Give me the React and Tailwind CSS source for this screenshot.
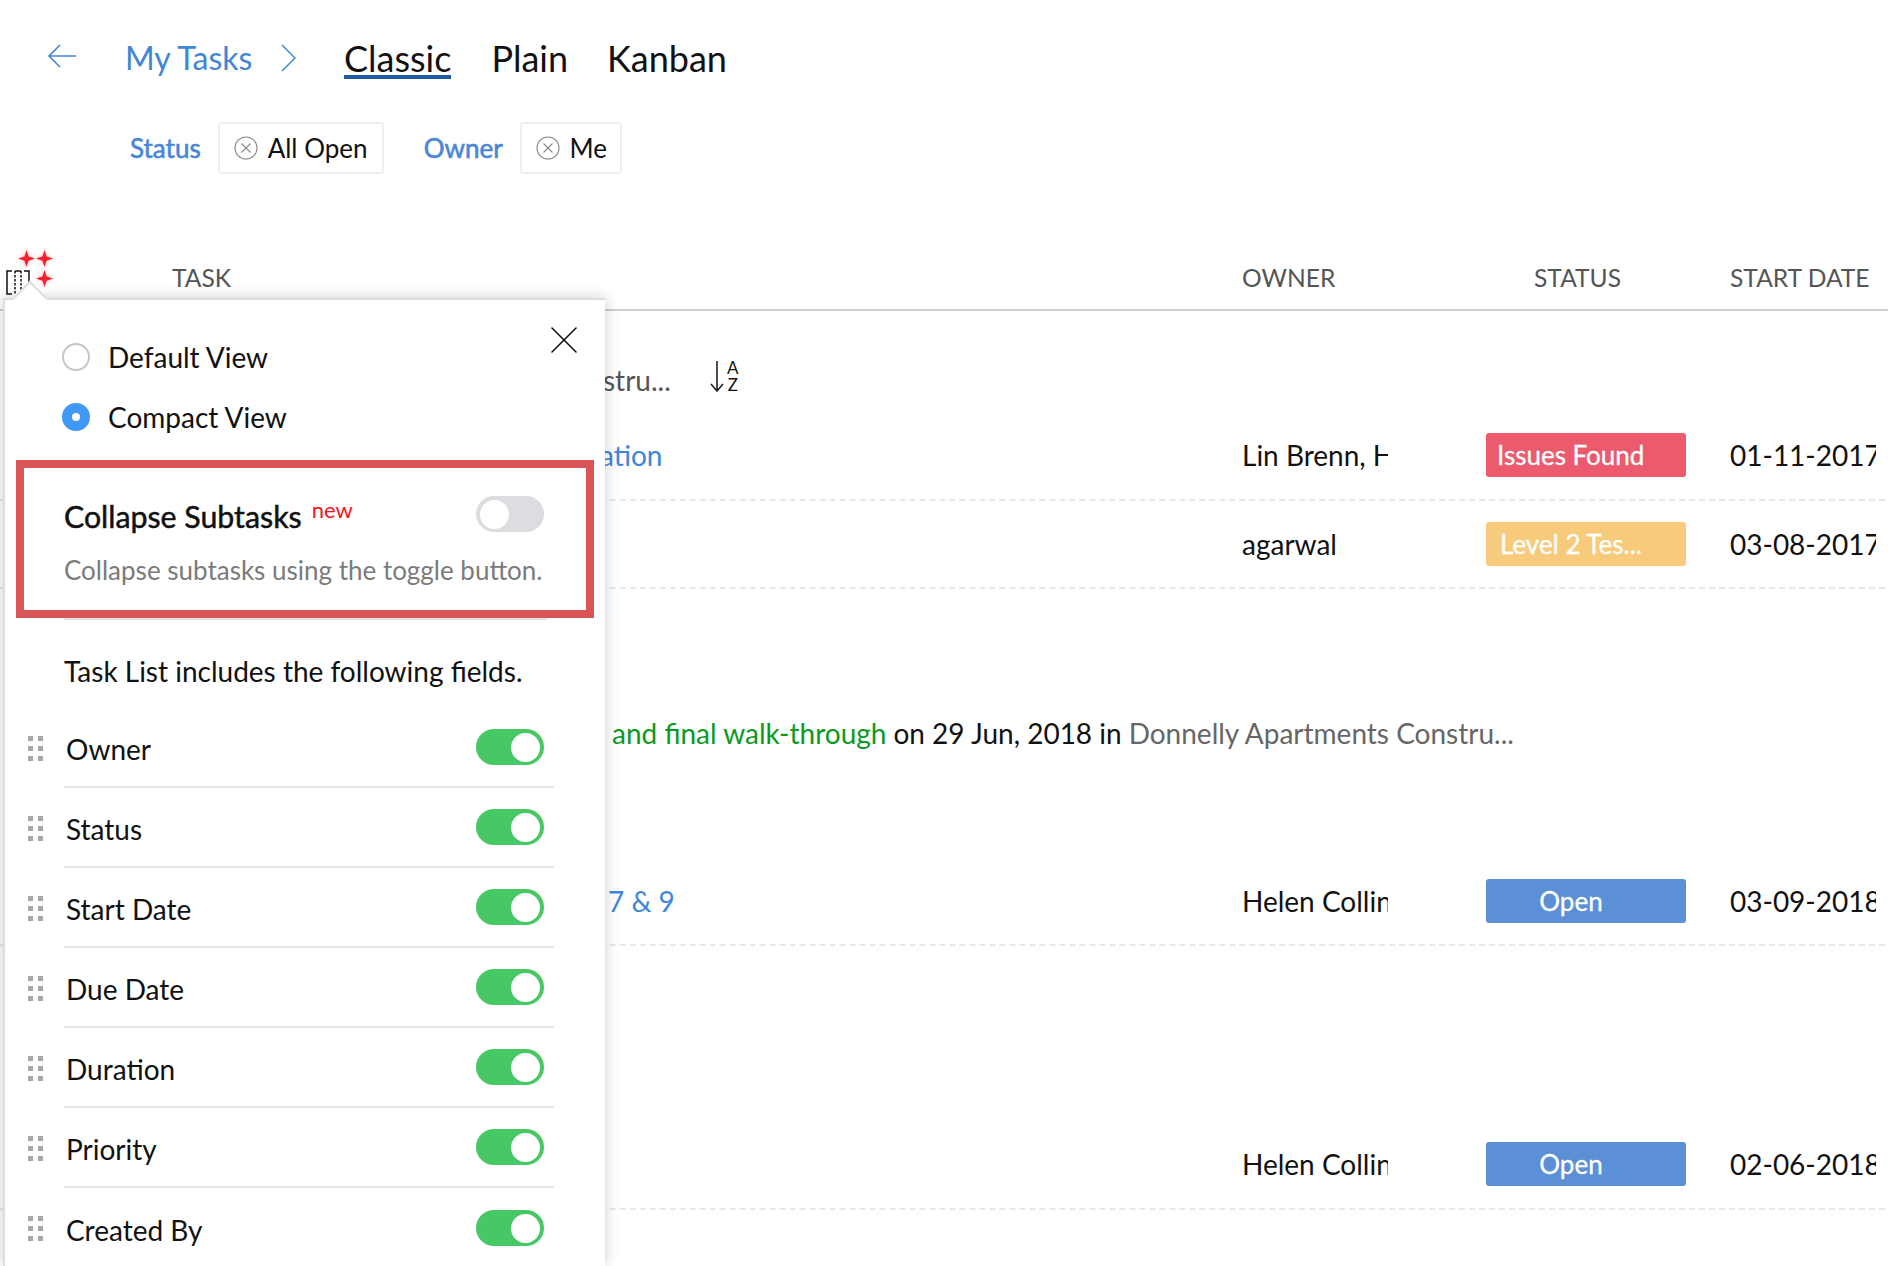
import { X } from 'lucide-react';

const fields = ['Owner', 'Status', 'Start Date', 'Due Date', 'Duration', 'Priority', 'Created By'];

function Star({ className }) {
  return (
    <svg viewBox="0 0 20 20" className={`drop-shadow-[0_0_2px_rgba(255,60,60,0.4)] ${className}`}>
      <path d="M10 0 L12.5 7.5 L20 10 L12.5 12.5 L10 20 L7.5 12.5 L0 10 L7.5 7.5 Z" fill="#f5222d" />
    </svg>
  );
}

function ColumnsIcon() {
  return (
    <svg viewBox="0 0 24 25" className="w-[24px] h-[25px] text-[#111]" fill="none" stroke="currentColor" strokeWidth="1.5">
      <path d="M6 1 H1 V24 H6" />
      <path d="M18 1 H23 V24 H18" />
      <path d="M9 1 V24 M15 1 V24" strokeDasharray="2.5 1.5" />
      <path d="M9 1 H15" />
    </svg>
  );
}

function RemoveIcon() {
  return (
    <svg viewBox="0 0 24 24" className="w-[24px] h-[24px] shrink-0" fill="none" stroke="#8a8a8a" strokeWidth="1.1">
      <circle cx="12" cy="12" r="11" />
      <path d="M7.5 7.5 L16.5 16.5 M16.5 7.5 L7.5 16.5" />
    </svg>
  );
}

function Toggle({ on }) {
  return (
    <div className={`w-[68px] h-[36px] rounded-full flex items-center px-[4px] ${on ? 'bg-[#48c765] justify-end' : 'bg-[#dcdde0] justify-start'}`}>
      <div className="w-[29px] h-[29px] rounded-full bg-white" />
    </div>
  );
}

function DragDots() {
  return (
    <div className="grid grid-cols-2 gap-x-[5px] gap-y-[5px] w-[14px]">
      {[0, 1, 2, 3, 4, 5].map((i) => (
        <span key={i} className="w-[5px] h-[5px] bg-[#a8a8a8]" />
      ))}
    </div>
  );
}

function Badge({ color, center, children }) {
  return (
    <div className={`w-[200px] h-[44px] rounded-[3px] flex items-center text-white text-[26px] [-webkit-text-stroke:0.3px] ${color} ${center}`}>
      {children}
    </div>
  );
}

function TaskRow({ height, task, owner, badge, date }) {
  return (
    <div className={`flex items-center ${height} border-b-2 border-dashed border-[#e8e8e8] mr-[3px]`}>
      <div className="w-[1242px] shrink-0 whitespace-nowrap">{task}</div>
      <div className="w-[146px] shrink-0 mr-[98px] overflow-hidden whitespace-nowrap">{owner}</div>
      <div className="w-[244px] shrink-0">{badge}</div>
      <div className="w-[146px] shrink-0 overflow-hidden whitespace-nowrap">{date}</div>
    </div>
  );
}

function SettingsPopover() {
  return (
    <div className="absolute left-[3px] top-[298px] w-[602px] h-[968px] pl-[1px] bg-white border-t-2 border-l-2 border-[#dedede] shadow-[0_0_14px_rgba(0,0,0,0.2)]">
      <div className="absolute left-[12px] top-[-14px] w-[26px] h-[26px] rotate-45 bg-white border-t-2 border-l-2 border-[#dedede]" />
      <X className="absolute left-[535px] top-[16px] w-[48px] h-[48px] text-[#111]" strokeWidth={0.8} />

      <div className="pt-[27px] pl-[56px] h-[160px]">
        <div className="flex items-center gap-[18px] h-[60px]">
          <span className="w-[28px] h-[28px] rounded-full border-2 border-[#c6c6c6] bg-white" />
          <span>Default View</span>
        </div>
        <div className="flex items-center gap-[18px] h-[60px]">
          <span className="w-[28px] h-[28px] rounded-full bg-[#3f97f6] flex items-center justify-center">
            <span className="w-[8px] h-[8px] rounded-full bg-white" />
          </span>
          <span>Compact View</span>
        </div>
      </div>

      <div className="mx-[10px] w-[578px] h-[158px] border-[8px] border-[#da5558] pl-[40px] pr-[42px] pt-[28px]">
        <div className="flex items-start justify-between h-[42px]">
          <div className="flex items-start leading-[42px] text-[30.3px] [-webkit-text-stroke:0.5px] mt-[-1px]">
            <span>Collapse Subtasks</span>
            <span className="text-[#f5121f] text-[22px] leading-[30px] ml-[10px] [-webkit-text-stroke:0px]">new</span>
          </div>
          <Toggle on={false} />
        </div>
        <div className="text-[#7b7b7b] text-[26px] leading-[40px] mt-[12px] whitespace-nowrap">Collapse subtasks using the toggle button.</div>
      </div>

      <div className="mx-[58px] h-[2px] bg-[#e2e2e2]" />
      <div className="pl-[58px] h-[88px] flex items-end leading-[40px] pb-[17px] whitespace-nowrap">Task List includes the following fields.</div>

      <div>
        {fields.map((name, i) => (
          <div key={name} className="relative flex items-center h-[80px] ml-[22px] mr-[51px]">
            <DragDots />
            <div className={`flex items-center justify-between self-stretch flex-1 ml-[22px] pr-[10px] ${i < fields.length - 1 ? 'border-b-2 border-[#e6e6e6]' : ''}`}>
              <span className="pl-[2px] mt-[3px]">{name}</span>
              <Toggle on />
            </div>
          </div>
        ))}
      </div>
    </div>
  );
}

export default function App() {
  return (
    <div className="relative w-[1888px] h-[1266px] overflow-hidden bg-white text-[#111] text-[28px] font-['Lato','Noto_Sans',sans-serif]">
      {/* breadcrumb + view tabs */}
      <div className="flex items-center h-[116px] pl-[47px] text-[36px]">
        <svg viewBox="0 0 30 24" className="w-[30px] h-[24px] mr-[48px] mb-[4px]" fill="none" stroke="#3f86d8" strokeWidth="1.6">
          <path d="M29 12 H2 M13 1 L2 12 L13 23" />
        </svg>
        <span className="text-[#3f86d8] text-[32px] w-[155px]">My Tasks</span>
        <svg viewBox="0 0 16 28" className="w-[16px] h-[28px] mr-[48px]" fill="none" stroke="#3f86d8" strokeWidth="1.5">
          <path d="M2 1 L15 14 L2 27" />
        </svg>
        <span className="relative mr-[40px]">
          Classic
          <span className="absolute left-0 right-0 top-[44px] h-[4px] bg-[#1f5aa0]" />
        </span>
        <span className="mr-[39px]">Plain</span>
        <span>Kanban</span>
      </div>

      {/* filters */}
      <div className="flex items-center h-[52px] mt-[6px] pl-[130px] text-[26px]">
        <span className="text-[#4a86d8] [-webkit-text-stroke:0.6px] mr-[17px]">Status</span>
        <div className="flex items-center gap-[10px] w-[166px] h-[52px] px-[14px] border-2 border-[#eeeeee] rounded-[4px] mr-[40px]">
          <RemoveIcon />
          <span>All Open</span>
        </div>
        <span className="text-[#4a86d8] [-webkit-text-stroke:0.6px] mr-[17px]">Owner</span>
        <div className="flex items-center gap-[10px] w-[102px] h-[52px] px-[14px] border-2 border-[#eeeeee] rounded-[4px]">
          <RemoveIcon />
          <span>Me</span>
        </div>
      </div>

      {/* table head */}
      <div className="relative flex items-center h-[137px] pt-[74px] border-b-2 border-[#cfcfcf] text-[#555] text-[24.6px]">
        <div className="absolute left-[6px] top-[96px]"><ColumnsIcon /></div>
        <Star className="absolute left-[18px] top-[76px] w-[17px] h-[17px]" />
        <Star className="absolute left-[36px] top-[76px] w-[17px] h-[17px]" />
        <Star className="absolute left-[36px] top-[96px] w-[17px] h-[17px]" />
        <div className="w-[1242px] shrink-0 pl-[172px]">TASK</div>
        <div className="w-[292px] shrink-0">OWNER</div>
        <div className="w-[196px] shrink-0">STATUS</div>
        <div>START DATE</div>
      </div>

      {/* rows */}
      <div className="flex items-start h-[100px] pt-[48px] pl-[603px]">
        <span className="text-[#555] w-[107px]">stru...</span>
        <div className="flex items-center gap-[3px] text-[#111]">
          <svg viewBox="0 0 14 32" className="w-[14px] h-[32px]" fill="none" stroke="#222" strokeWidth="1.6">
            <path d="M7 1 V31 M1 24 L7 31 L13 24" />
          </svg>
          <div className="flex flex-col items-center text-[17px] leading-[17px]">
            <span>A</span>
            <span>Z</span>
          </div>
        </div>
      </div>
      <TaskRow
        height="h-[90px]"
        task={<span className="pl-[600px] text-[#3f86d8]">ation</span>}
        owner="Lin Brenn, Helen"
        badge={<Badge color="bg-[#eb5a6d]" center="pl-[11px]">Issues Found</Badge>}
        date="01-11-2017"
      />
      <TaskRow
        height="h-[88px]"
        owner="agarwal"
        badge={<Badge color="bg-[#f8cb7c]" center="pl-[14px]">Level 2 Tes...</Badge>}
        date="03-08-2017"
      />
      <div className="flex items-center h-[269px] pt-[18px] pl-[612px] whitespace-nowrap">
        <span className="text-[#0a9a1e]">and final walk-through</span>
        <span className="ml-[7px]">on 29 Jun, 2018 in</span>
        <span className="ml-[7px] text-[#666]">Donnelly Apartments Constru...</span>
      </div>
      <TaskRow
        height="h-[88px]"
        task={<span className="pl-[608px] text-[#3f86d8]">7 &amp; 9</span>}
        owner="Helen Collins"
        badge={<Badge color="bg-[#5b8fd6]" center="justify-center pr-[30px]">Open</Badge>}
        date="03-09-2018"
      />
      <div className="h-[174px]" />
      <TaskRow
        height="h-[90px]"
        owner="Helen Collins"
        badge={<Badge color="bg-[#5b8fd6]" center="justify-center pr-[30px]">Open</Badge>}
        date="02-06-2018"
      />

      <SettingsPopover />
    </div>
  );
}
